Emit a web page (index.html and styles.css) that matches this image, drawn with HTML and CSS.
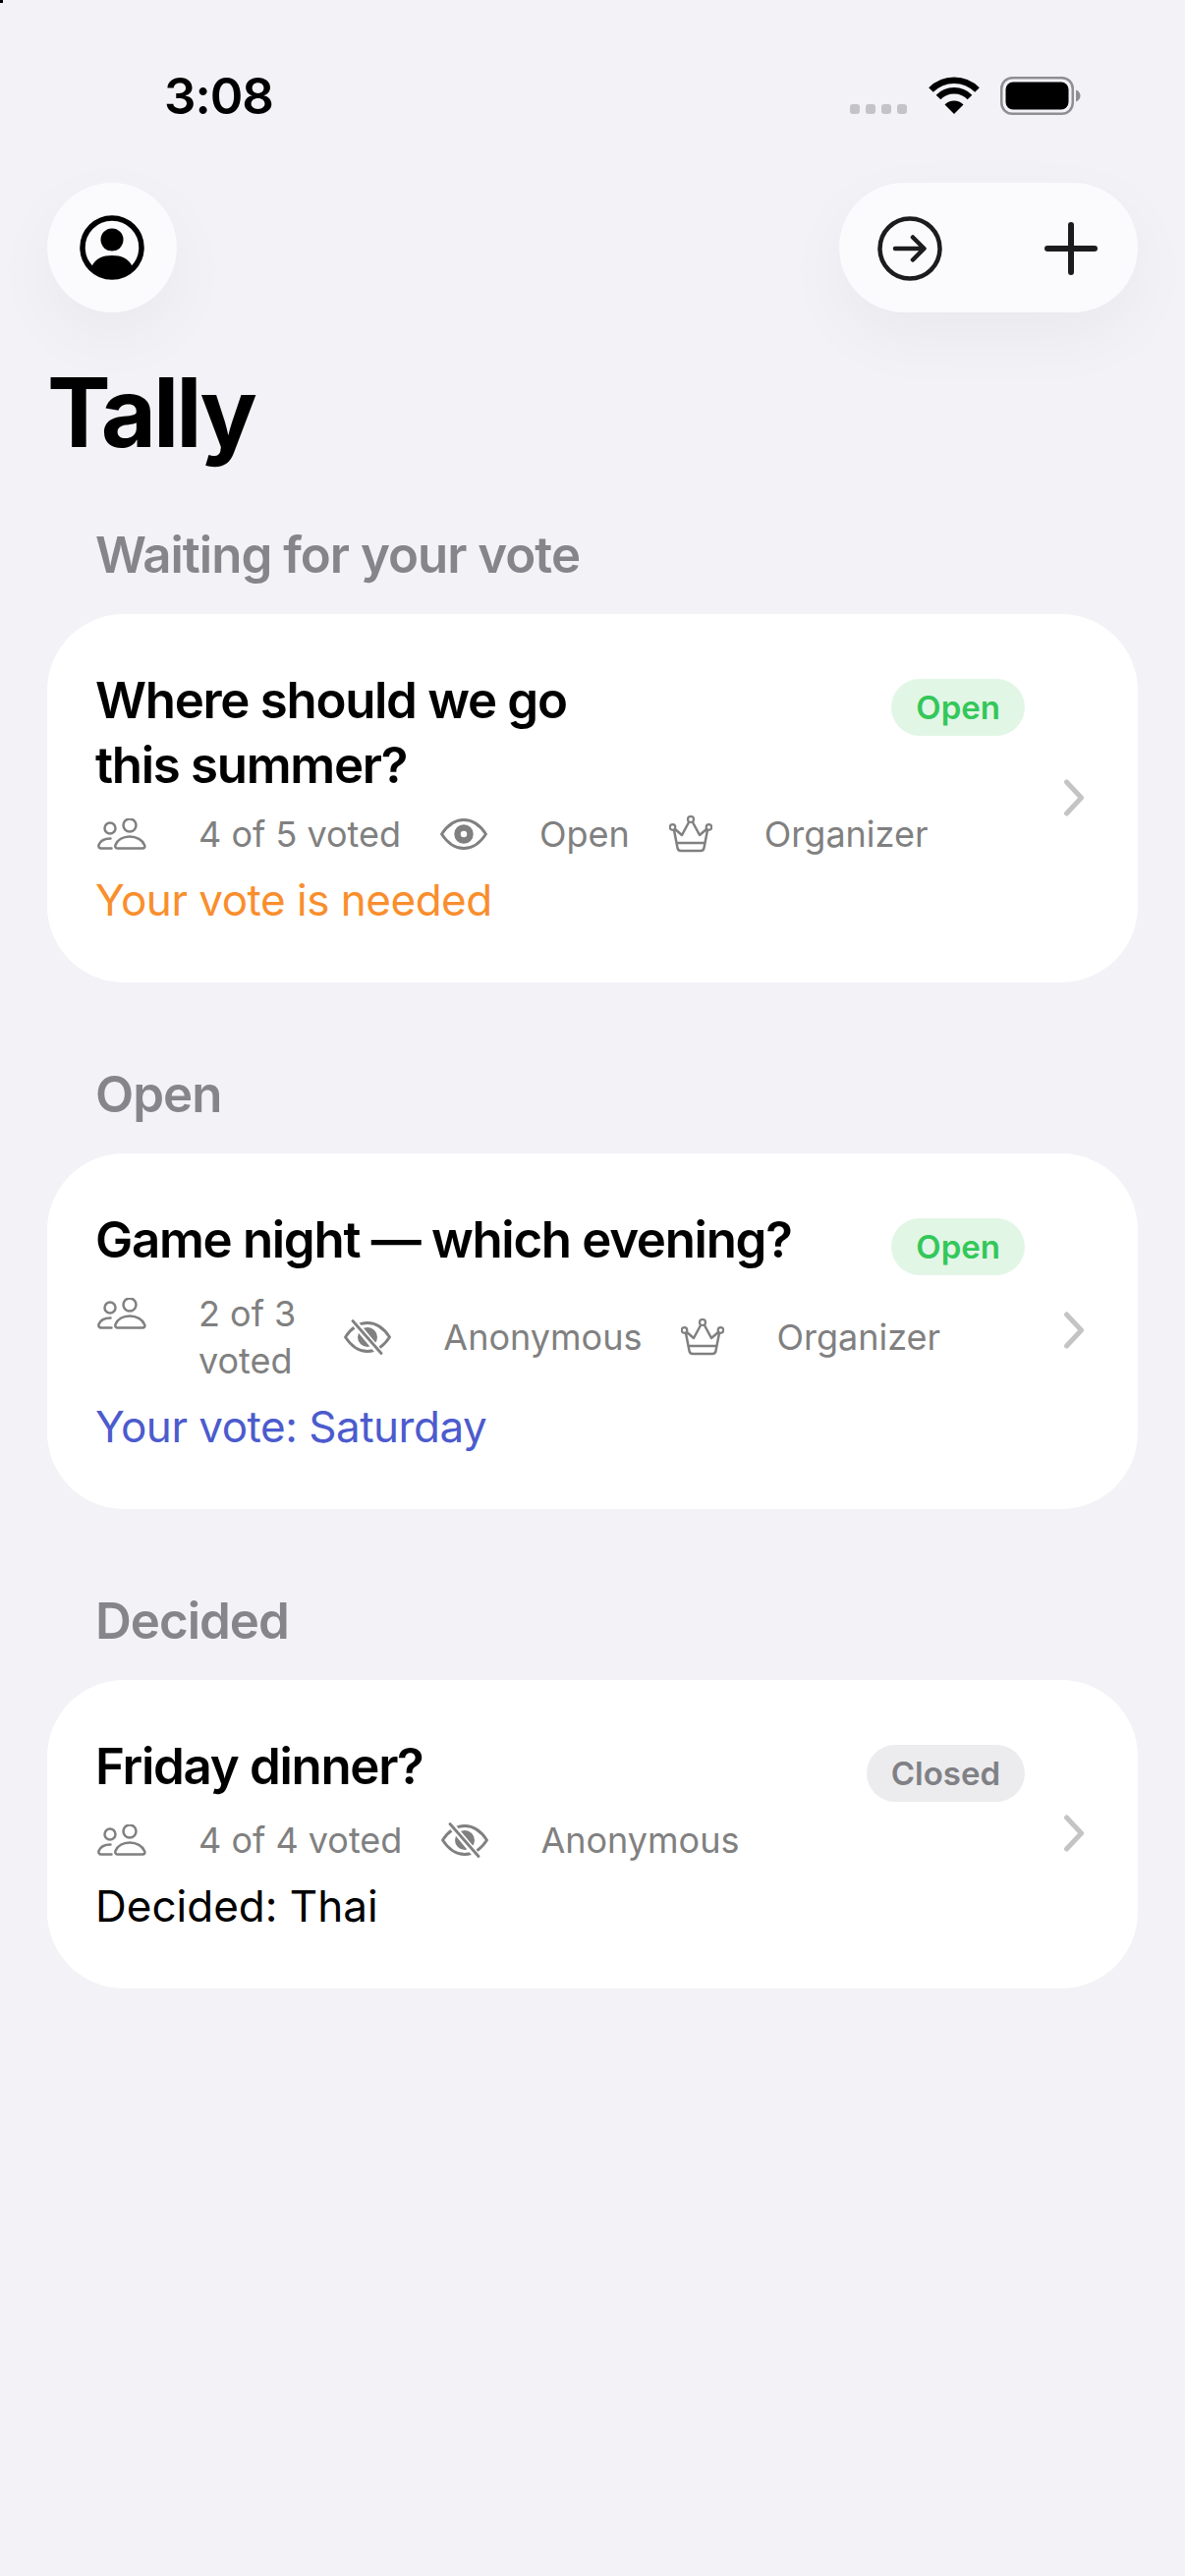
FILE: index.html
```html
<!DOCTYPE html>
<html lang="en">
<head>
    <meta charset="UTF-8">
    <meta name="viewport" content="width=device-width, initial-scale=1.0">
    <title>Tally</title>
    <link rel="stylesheet" href="styles.css">
</head>
<body>
    <svg class="sprite" width="0" height="0">
        <symbol id="people" viewBox="0 0 50 32">
            <circle cx="13" cy="10" r="5.500" fill="none" stroke="currentColor" stroke-width="2.500"/>
            <circle cx="33" cy="7" r="6.500" fill="none" stroke="currentColor" stroke-width="2.500"/>
            <path d="M20.500 30.500H46C48 30.500 49 29 48 27C46 22 40 18.500 33 18.500C26 18.500 20.500 22 18.500 27C18 29 18.500 30.500 20.500 30.500Z" fill="none" stroke="currentColor" stroke-width="2.500"/>
            <path d="M14.500 30.500H4C2 30.500 1 29 1.500 27C3 23 7 20.500 13.500 20.500" fill="none" stroke="currentColor" stroke-width="2.500" stroke-linecap="round"/>
        </symbol>
        <symbol id="eye" viewBox="0 0 48 32">
            <path d="M1.500 16C8 6 16 1.500 24 1.500C32 1.500 40 6 46.500 16C40 26 32 30.500 24 30.500C16 30.500 8 26 1.500 16Z" fill="none" stroke="currentColor" stroke-width="2.800"/>
            <circle cx="24" cy="16" r="6.500" fill="none" stroke="currentColor" stroke-width="6.500"/>
        </symbol>
        <symbol id="eye-off" viewBox="0 0 48 36">
            <path d="M1.500 18C8 8 16 3.500 24 3.500C32 3.500 40 8 46.500 18C40 28 32 32.500 24 32.500C16 32.500 8 28 1.500 18Z" fill="none" stroke="currentColor" stroke-width="2.800"/>
            <circle cx="24" cy="18" r="10" fill="currentColor"/>
            <path d="M8 0L38 36" stroke="#fff" stroke-width="7"/>
            <path d="M9 1.500L38 34.500" stroke="currentColor" stroke-width="2.800" stroke-linecap="round"/>
        </symbol>
        <symbol id="crown" viewBox="0 0 44 38">
            <circle cx="22" cy="4" r="3" fill="none" stroke="currentColor" stroke-width="2.200"/>
            <circle cx="3.500" cy="12" r="2.800" fill="none" stroke="currentColor" stroke-width="2.200"/>
            <circle cx="40.500" cy="12" r="2.800" fill="none" stroke="currentColor" stroke-width="2.200"/>
            <path d="M6 14L13 20L20 7M24 7L31 20L38 14M5 15L8.500 33Q9 36 12 36H32Q35 36 35.500 33L39 15M8 28H36" fill="none" stroke="currentColor" stroke-width="2.500" stroke-linejoin="round"/>
        </symbol>
        <symbol id="chevron" viewBox="0 0 22 38">
            <path d="M3.500 3L18.500 19L3.500 35" fill="none" stroke="currentColor" stroke-width="5" stroke-linecap="round" stroke-linejoin="round"/>
        </symbol>
    </svg>

    <div class="corner-mark"></div>

    <div class="status-bar">
        <span class="clock">3:08</span>
        <div class="status-icons">
            <div class="signal"><i></i><i></i><i></i><i></i></div>
            <svg class="wifi" viewBox="0 0 52 38">
                <path d="M2.500 13.500A33 33 0 0 1 49.500 13.500" fill="none" stroke="#000" stroke-width="6.500"/>
                <path d="M10 21A22.500 22.500 0 0 1 42 21" fill="none" stroke="#000" stroke-width="6.500"/>
                <path d="M26 38L16.500 28.500A13.500 13.500 0 0 1 35.500 28.500Z" fill="#000"/>
            </svg>
            <svg class="battery" viewBox="0 0 82 39">
                <rect x="1.250" y="1.250" width="72.500" height="36.500" rx="11" fill="none" stroke="#8e8e93" stroke-width="2.500"/>
                <rect x="5.500" y="5.500" width="64" height="28" rx="7.500" fill="#000"/>
                <path d="M77 13.500C80 14.500 81.500 17 81.500 19.500C81.500 22 80 24.500 77 25.500Z" fill="#8e8e93"/>
            </svg>
        </div>
    </div>

    <div class="toolbar">
        <button class="glass round">
            <svg class="icon-66" viewBox="0 0 66 66">
                <circle cx="33" cy="33" r="30" fill="none" stroke="#000" stroke-width="5.500"/>
                <circle cx="33" cy="25" r="11.500" fill="#000"/>
                <path d="M12.500 52C16 44 24 41 33 41C42 41 50 44 53.500 52C48 58.500 41 62 33 62C25 62 18 58.500 12.500 52Z" fill="#000"/>
            </svg>
        </button>
        <div class="glass pill">
            <svg class="icon-66" viewBox="0 0 66 66">
                <circle cx="33" cy="33" r="30.500" fill="none" stroke="#1c1c1e" stroke-width="4.500"/>
                <path d="M18 33H47M36 21.500L47.500 33L36 44.500" fill="none" stroke="#1c1c1e" stroke-width="4.500" stroke-linecap="round" stroke-linejoin="round"/>
            </svg>
            <svg class="icon-plus" viewBox="0 0 54 54">
                <path d="M27 3V51M3 27H51" fill="none" stroke="#1c1c1e" stroke-width="6" stroke-linecap="round"/>
            </svg>
        </div>
    </div>

    <h1 class="page-title">Tally</h1>

    <main>
        <h2 class="section-title">Waiting for your vote</h2>
        <div class="card">
            <div class="card-body">
                <div class="card-head">
                    <h3 class="card-title">Where should we go<br>this summer?</h3>
                    <span class="badge badge-open">Open</span>
                </div>
                <div class="meta meta-close">
                    <div class="meta-item"><svg class="ico-people"><use href="#people"/></svg><span>4 of 5 voted</span></div>
                    <div class="meta-item"><svg class="ico-eye"><use href="#eye"/></svg><span>Open</span></div>
                    <div class="meta-item"><svg class="ico-crown"><use href="#crown"/></svg><span>Organizer</span></div>
                </div>
                <p class="note note-orange">Your vote is needed</p>
            </div>
            <svg class="chevron"><use href="#chevron"/></svg>
        </div>

        <h2 class="section-title">Open</h2>
        <div class="card">
            <div class="card-body">
                <div class="card-head">
                    <h3 class="card-title">Game night — which evening?</h3>
                    <span class="badge badge-open">Open</span>
                </div>
                <div class="meta">
                    <div class="meta-item meta-top"><svg class="ico-people"><use href="#people"/></svg><span>2 of 3<br>voted</span></div>
                    <div class="meta-item"><svg class="ico-eye"><use href="#eye-off"/></svg><span>Anonymous</span></div>
                    <div class="meta-item"><svg class="ico-crown"><use href="#crown"/></svg><span>Organizer</span></div>
                </div>
                <p class="note note-blue">Your vote: Saturday</p>
            </div>
            <svg class="chevron"><use href="#chevron"/></svg>
        </div>

        <h2 class="section-title">Decided</h2>
        <div class="card">
            <div class="card-body">
                <div class="card-head">
                    <h3 class="card-title">Friday dinner?</h3>
                    <span class="badge badge-closed">Closed</span>
                </div>
                <div class="meta">
                    <div class="meta-item"><svg class="ico-people"><use href="#people"/></svg><span>4 of 4 voted</span></div>
                    <div class="meta-item"><svg class="ico-eye"><use href="#eye-off"/></svg><span>Anonymous</span></div>
                </div>
                <p class="note note-decided">Decided: Thai</p>
            </div>
            <svg class="chevron"><use href="#chevron"/></svg>
        </div>
    </main>
</body>
</html>
```
FILE: styles.css
```css
/* General */
html, body {
    margin: 0;
    padding: 0;
}

body {
    width: 1206px;
    height: 2622px;
    overflow: hidden;
    background-color: #f2f2f7;
    color: #000;
    font-family: Inter, "Liberation Sans", sans-serif;
}

.sprite {
    position: absolute;
}

.corner-mark {
    position: absolute;
    top: 0;
    left: 0;
    width: 3px;
    height: 3px;
    background-color: #000;
}

/* Status bar */
.status-bar {
    display: flex;
    justify-content: space-between;
    align-items: flex-start;
    height: 186px;
    padding: 0 106px 0 167px;
    box-sizing: border-box;
}

.clock {
    margin-top: 68px;
    font-size: 51px;
    line-height: 60px;
    font-weight: 600;
    letter-spacing: -1px;
}

.status-icons {
    display: flex;
    align-items: flex-start;
    margin-top: 78px;
}

.signal {
    display: flex;
    gap: 6px;
    margin-top: 28px;
    margin-right: 22px;
}

.signal i {
    width: 10px;
    height: 10px;
    border-radius: 3px;
    background-color: #c4c4c8;
}

.wifi {
    width: 52px;
    height: 38px;
    margin-right: 21px;
}

.battery {
    width: 82px;
    height: 39px;
}

/* Toolbar */
.toolbar {
    display: flex;
    justify-content: space-between;
    padding: 0 48px;
}

.glass {
    display: flex;
    align-items: center;
    height: 132px;
    box-sizing: border-box;
    border: none;
    border-radius: 66px;
    background-color: #fbfbfe;
    box-shadow: 0 24px 70px rgba(0, 0, 0, 0.045);
}

.round {
    width: 132px;
    justify-content: center;
    padding: 0;
}

.pill {
    width: 304px;
    padding: 2px 0 0 39px;
}

.icon-66 {
    width: 66px;
    height: 66px;
}

.icon-plus {
    width: 54px;
    height: 54px;
    margin-left: 104px;
}

.page-title {
    margin: 42px 0 0 48px;
    font-size: 97px;
    line-height: 120px;
    font-weight: 700;
    letter-spacing: -3px;
}

/* Sections */
main {
    padding: 0 48px;
}

.section-title {
    margin: 0 0 27px;
    padding-left: 49px;
    font-size: 51px;
    line-height: 66px;
    font-weight: 600;
    color: #85858b;
    letter-spacing: -1px;
}

main > .section-title:first-child {
    margin-top: 52px;
}

.card + .section-title {
    margin-top: 81px;
}

/* Cards */
.card {
    display: flex;
    align-items: center;
    padding: 55px 54px 57px 49px;
    border-radius: 78px;
    background-color: #fff;
}

.card-body {
    flex: 1;
    min-width: 0;
}

.card-head {
    display: flex;
    justify-content: space-between;
    align-items: flex-start;
}

.card-title {
    margin: 0;
    font-size: 51px;
    line-height: 66px;
    font-weight: 600;
    letter-spacing: -1.3px;
}

.badge {
    margin-top: 11px;
    padding: 0 25px;
    font-size: 33px;
    line-height: 58px;
    font-weight: 600;
    border-radius: 29px;
}

.badge-open {
    background-color: #e2f6e6;
    color: #34c759;
}

.badge-closed {
    background-color: #ececee;
    color: #808085;
}

.meta {
    display: flex;
    align-items: center;
    gap: 40px;
    margin-top: 15px;
    color: #808080;
    font-size: 36px;
    line-height: 48px;
}

.meta-close {
    margin-top: 13px;
}

.meta-item {
    display: flex;
    align-items: center;
    gap: 53px;
}

.meta-top {
    align-items: flex-start;
    margin-right: 9px;
}

.meta-top svg {
    margin-top: 8px;
}

.ico-people {
    width: 50px;
    height: 32px;
    margin-left: 2px;
}

.ico-eye {
    width: 48px;
    height: 36px;
}

.ico-crown {
    width: 44px;
    height: 38px;
}

.note {
    margin: 16px 0 0;
    font-size: 44px;
    line-height: 54px;
    letter-spacing: -0.5px;
}

.note-orange {
    color: #f98e2d;
}

.note-blue {
    color: #4c5bcd;
}

.note-decided {
    letter-spacing: 0;
}

.chevron {
    flex: none;
    width: 22px;
    height: 38px;
    margin-left: 39px;
    color: #c4c4c6;
}
```
